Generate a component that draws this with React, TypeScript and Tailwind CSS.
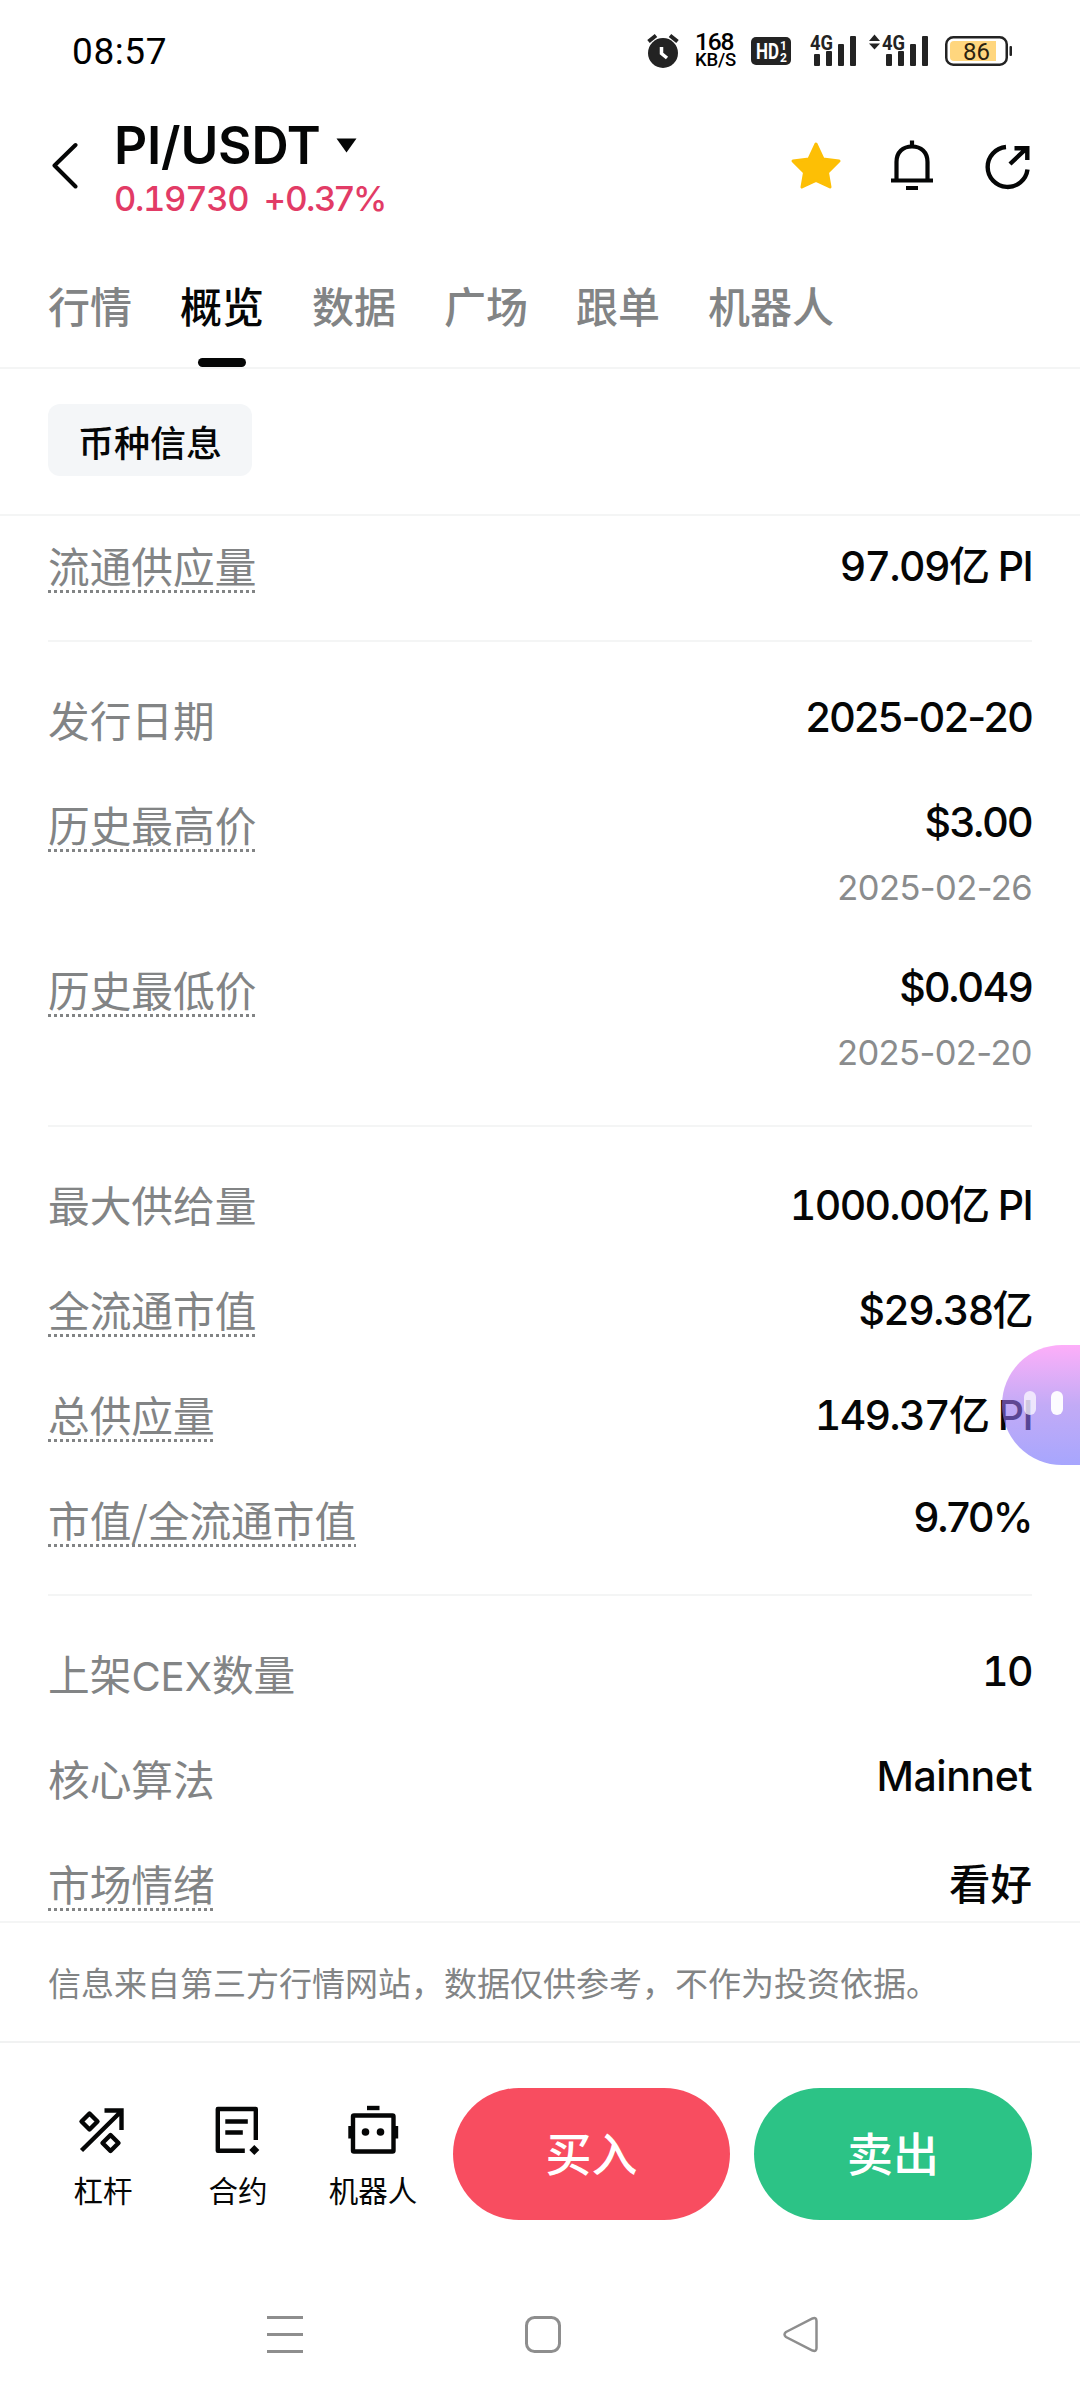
import type { ReactNode } from "react";

const inter = "font-['Inter','Noto_Sans_CJK_SC',sans-serif]";

function figures(text: string) {
  return /1|亿/.test(text) ? "[font-feature-settings:'tnum']" : "";
}

function Label({ children, dotted }: { children: string; dotted?: boolean }) {
  const parts = children.split(/([A-Z]+)/);
  return (
    <span
      className={
        "h-[54px] leading-[52px] text-[41.700px] text-[#828485] whitespace-nowrap " +
        (dotted
          ? "bg-[repeating-linear-gradient(90deg,#828485_0,#828485_3px,transparent_3px,transparent_6px)] bg-[length:100%_3px] bg-bottom bg-no-repeat"
          : "")
      }
    >
      {parts.map((p, i) =>
        /^[A-Z]+$/.test(p) ? (
          <span key={i} className="font-['Inter'] text-[40px] leading-none">
            {p}
          </span>
        ) : (
          p
        )
      )}
    </span>
  );
}

type RowData = { label: string; value: string; dotted?: boolean; date?: string; cjk?: boolean };

function tracking(value: string) {
  if (value === "看好") return " text-[41.5px]";
  if (value === "Mainnet") return " text-[41px] tracking-[-0.4px]";
  return " text-[41px] tracking-[-1.6px]";
}

function Row({ label, value, dotted, date, cjk }: RowData) {
  return (
    <div className="flex items-start justify-between">
      <div className="flex h-[84px] items-center">
        <Label dotted={dotted}>{label}</Label>
      </div>
      <div className="flex flex-col items-end">
        <div
          className={
            "flex items-center whitespace-pre font-medium text-[#050606] " +
            inter +
            " " +
            figures(value) +
            tracking(value) +
            (cjk ? " h-[86px] mb-[-2px]" : " h-[80px] mb-[-2px]")
          }
        >
          {value}
        </div>
        {date && (
          <div className={"mb-[12px] flex h-[54px] items-center text-[34.5px] tracking-[-0.6px] text-[#8a8c8d] " + inter}>
            {date}
          </div>
        )}
      </div>
    </div>
  );
}

function Section({ rows, className }: { rows: RowData[]; className: string }) {
  return (
    <section className={"flex shrink-0 flex-col gap-[21px] border-[#f4f5f5] " + className}>
      {rows.map((r) => (
        <Row key={r.label} {...r} />
      ))}
    </section>
  );
}

function Signal({ arrows }: { arrows?: boolean }) {
  return (
    <svg className="overflow-visible" width="60" height="36" viewBox="0 0 60 36" fill="#232323">
      {arrows && (
        <>
          <path d="M0 8 L5.500 1.500 L11 8Z" />
          <path d="M0 10.500 L5.500 16.500 L11 10.500Z" />
        </>
      )}
      <text x="13" y="16.500" fontSize="21" fontWeight="700" fontFamily="Roboto, sans-serif" textLength="23" lengthAdjust="spacingAndGlyphs">
        4G
      </text>
      <rect x="17" y="21" width="6" height="12" rx="1" />
      <rect x="29" y="18" width="6" height="15" rx="1" />
      <rect x="41" y="11" width="6" height="22" rx="1" />
      <rect x="53" y="3" width="6" height="30" rx="1" />
    </svg>
  );
}

function StatusBar() {
  return (
    <div className="flex h-[102px] shrink-0 items-center pl-[72px] pr-[67px] font-['Roboto',sans-serif]">
      <span className="text-[37px] leading-none tracking-[0.6px] text-black">08:57</span>
      <div className="ml-auto flex items-center">
        <svg width="32" height="36" viewBox="0 0 32 36">
          <circle cx="16" cy="20" r="15" fill="#232323" />
          <path d="M1.500 8.500 L9 2.500 M30.500 8.500 L23 2.500" stroke="#232323" strokeWidth="4" />
          <path d="M14.500 14 V20.500 L20 25" stroke="#fff" strokeWidth="3.500" fill="none" />
        </svg>
        <div className="ml-[16px] flex w-[41px] flex-col items-start text-black">
          <span className="text-[24.5px] font-medium leading-[19px] tracking-[-1.2px]">168</span>
          <span className="text-[18.500px] font-medium leading-[19px] tracking-[-0.2px]">KB/S</span>
        </div>
        <svg className="ml-[15px]" width="41" height="29" viewBox="0 0 41 29">
          <rect width="40" height="28" rx="5" fill="#232323" />
          <g fill="#fff" fontFamily="Roboto, sans-serif" fontWeight="700">
            <text x="5" y="22" fontSize="22" textLength="23" lengthAdjust="spacingAndGlyphs">HD</text>
            <text x="29" y="13" fontSize="12">1</text>
            <text x="29" y="25" fontSize="12">2</text>
          </g>
        </svg>
        <div className="ml-[5px] flex gap-[12px]">
          <Signal />
          <Signal arrows />
        </div>
        <svg className="ml-[16px]" width="68" height="30" viewBox="0 0 68 30">
          <rect x="1.250" y="1.250" width="60.500" height="27.500" rx="7" fill="#fff" stroke="#232323" strokeWidth="2.500" />
          <path d="M9 5 H51 V25 H9 A4 4 0 0 1 5 21 V9 A4 4 0 0 1 9 5Z" fill="#ffd67e" />
          <rect x="64.500" y="10" width="2.500" height="10" rx="1" fill="#232323" />
          <text x="31.500" y="23.500" textAnchor="middle" fontSize="24" fill="#2b2210" fontFamily="Roboto, sans-serif">86</text>
        </svg>
      </div>
    </div>
  );
}

function Header() {
  return (
    <header className="flex h-[128px] shrink-0 pl-[52px] pr-[49px]">
      <svg className="mt-[40px]" width="28" height="48" viewBox="0 0 28 48">
        <path d="M23.500 3 L2.500 23.500 L23.500 44.500" fill="none" stroke="#050606" strokeWidth="4" strokeLinecap="round" strokeLinejoin="round" />
      </svg>
      <div className={"ml-[34px] mt-[12px] flex flex-col " + inter}>
        <div className="flex items-center">
          <h1 className="text-[51.500px] font-semibold leading-[62px] tracking-[-0.2px] text-[#050606]">PI/USDT</h1>
          <svg className="ml-[15px]" width="21" height="15" viewBox="0 0 21 15">
            <path d="M0.500 0.500 H20.500 L10.500 14.500Z" fill="#050606" />
          </svg>
        </div>
        <div className="flex gap-[15px] text-[34.500px] font-medium leading-[46px] text-[#e23b66]">
          <span className="tracking-[-1.3px] [font-feature-settings:'tnum']">0.19730</span>
          <span className="tracking-[-1.1px]">+0.37%</span>
        </div>
      </div>
      <div className="ml-auto mt-[38px] flex h-[52px]">
        <svg width="52" height="52" viewBox="0 0 52 52">
          <path d="M26 4 L33 19 L49 21 L37.500 32.500 L40 47 L26 40.500 L12 47 L14.500 32.500 L3 21 L19 19Z" fill="#fdbf05" stroke="#fdbf05" strokeWidth="3" strokeLinejoin="round" />
        </svg>
        <svg className="ml-[48px]" width="44" height="52" viewBox="0 0 44 52" fill="none" stroke="#050606" strokeWidth="4.200">
          <path d="M22 0.500 V7" />
          <path d="M6.500 40 V22 C6.500 12 13 6.500 22 6.500 S37.500 12 37.500 22 V40" />
          <path d="M1 40.500 H43 M16 48 H28" />
        </svg>
        <svg className="ml-[51px]" width="46" height="52" viewBox="0 0 46 52" fill="none" stroke="#050606" strokeWidth="4.400">
          <path d="M21 7 A20 20 0 1 0 42.500 29.500" />
          <path d="M25 24 L42 8 M29.500 8.200 H42.300 V20" />
        </svg>
      </div>
    </header>
  );
}

const tabs = ["行情", "概览", "数据", "广场", "跟单", "机器人"];

const supply: RowData[] = [{ label: "流通供应量", value: "97.09亿 PI", dotted: true, cjk: true }];
const prices: RowData[] = [
  { label: "发行日期", value: "2025-02-20" },
  { label: "历史最高价", value: "$3.00", dotted: true, date: "2025-02-26" },
  { label: "历史最低价", value: "$0.049", dotted: true, date: "2025-02-20" },
];
const caps: RowData[] = [
  { label: "最大供给量", value: "1000.00亿 PI", cjk: true },
  { label: "全流通市值", value: "$29.38亿", dotted: true, cjk: true },
  { label: "总供应量", value: "149.37亿 PI", dotted: true, cjk: true },
  { label: "市值/全流通市值", value: "9.70%", dotted: true },
];
const misc: RowData[] = [
  { label: "上架CEX数量", value: "10" },
  { label: "核心算法", value: "Mainnet" },
  { label: "市场情绪", value: "看好", dotted: true, cjk: true },
];

function Action({ label, children, className }: { label: string; children: ReactNode; className: string }) {
  return (
    <div className={"flex flex-col items-center " + className}>
      <svg width="52" height="52" viewBox="0 0 52 52" fill="none" stroke="#050606" strokeWidth="4.400">
        {children}
      </svg>
      <span className="mt-[11px] text-[29.500px] leading-[44px] text-[#050606]">{label}</span>
    </div>
  );
}

export default function App() {
  return (
    <div className="relative flex h-[2400px] w-[1080px] flex-col overflow-hidden bg-white font-['Noto_Sans_CJK_SC',sans-serif]">
      <StatusBar />
      <Header />
      <nav className="flex h-[139px] shrink-0 gap-[48px] border-b-2 border-[#f4f5f5] px-[48px]">
        {tabs.map((t) => (
          <div
            key={t}
            className={"flex flex-col items-center text-[42px] font-medium " + (t === "概览" ? "text-[#050606]" : "text-[#828485]")}
          >
            <span className="mt-[45px] leading-[60px]">{t}</span>
            {t === "概览" && <span className="mt-[23px] h-[9px] w-[48px] rounded-full bg-[#050606]" />}
          </div>
        ))}
      </nav>
      <div className="flex h-[147px] shrink-0 items-start border-b-2 border-[#f4f5f5] px-[48px] pt-[35px]">
        <div className="flex h-[72px] items-center rounded-[12px] bg-[#f4f6f8] px-[30px] pt-[2px] text-[36px] font-medium text-[#050606]">币种信息</div>
      </div>
      <main className="flex h-[1407px] shrink-0 flex-col overflow-hidden border-b-2 border-[#f4f5f5] px-[48px]">
        <Section rows={supply} className="border-b-2 pb-[32px] pt-[8px]" />
        <Section rows={prices} className="border-b-2 pb-[33px] pt-[36px]" />
        <Section rows={caps} className="border-b-2 pb-[32px] pt-[36px]" />
        <Section rows={misc} className="pt-[36px]" />
      </main>
      <div className="flex h-[120px] shrink-0 items-center border-b-2 border-[#f1f2f2] px-[48px] pt-[2px] text-[33px] text-[#828485]">
        信息来自第三方行情网站，数据仅供参考，不作为投资依据。
      </div>
      <div className="flex h-[219px] shrink-0 items-start pr-[48px] pt-[45px]">
        <div className="flex pl-[58px] pt-[16px]">
          <Action label="杠杆" className="w-[90px]">
            <g transform="translate(-2.500 0)">
              <path d="M7 46.500 L46 8 M30 6.500 H47 V26" />
              <path d="M15 9.500 L23 17.500 L15 25.500 L7 17.500Z M36 31 L44 39 L36 47 L28 39Z" strokeLinejoin="round" />
            </g>
          </Action>
          <Action label="合约" className="ml-[45px] w-[90px]">
            <g transform="translate(-1.200 0)">
              <path d="M34 46.800 H7 V5 H45 V36" strokeLinejoin="round" />
              <path d="M14.500 17.500 H37 M14.500 28.500 H32" />
              <path d="M43.500 41 L48.500 46 L43.500 51 L38.500 46Z" fill="#050606" stroke="none" />
            </g>
          </Action>
          <Action label="机器人" className="ml-[44px] w-[92px]">
            <path d="M20 4 H32.500" />
            <rect x="6" y="11.500" width="40.500" height="36" rx="1" />
            <path d="M3.500 22 V34.500 M49 22 V34.500" />
            <circle cx="18.500" cy="28" r="3.800" fill="#050606" stroke="none" />
            <circle cx="33.500" cy="28" r="3.800" fill="#050606" stroke="none" />
          </Action>
        </div>
        <div className="ml-auto flex gap-[24px] text-[46px] font-medium text-white">
          <button className="h-[132px] w-[277px] rounded-full bg-[#f84d60] pb-[5px]">买入</button>
          <button className="h-[132px] w-[278px] rounded-full bg-[#2cc386] pb-[5px]">卖出</button>
        </div>
      </div>
      <div className="flex items-center pl-[267px] pt-[54px]">
        <svg width="36" height="37" viewBox="0 0 36 37" stroke="#8e8e8e" strokeWidth="3">
          <path d="M0 1.500 H36 M0 18.500 H36 M0 35.500 H36" />
        </svg>
        <svg className="ml-[222px]" width="36" height="37" viewBox="0 0 36 37" fill="none" stroke="#8e8e8e" strokeWidth="3">
          <rect x="1.500" y="1.500" width="33" height="34" rx="8" />
        </svg>
        <svg className="ml-[222px]" width="36" height="37" viewBox="0 0 36 37" fill="none" stroke="#8e8e8e" strokeWidth="2.500">
          <path d="M3 16 L29.500 2.500 Q33.500 1 33.500 5 V32 Q33.500 36 29.500 34.500 L3 21 Q0 18.500 3 16Z" />
        </svg>
      </div>
      {/* floating assistant tab docked to the right edge */}
      <div className="absolute left-[1002px] top-[1345px] h-[120px] w-[78px] overflow-hidden rounded-l-[60px]">
        <div className="h-full w-full bg-linear-to-b from-[#fc78f5]/60 via-[#9a72f0]/60 to-[#6c6afc]/60" />
        <span className="absolute left-[22px] top-[46px] h-[24px] w-[12px] rounded-full bg-white/70" />
        <span className="absolute left-[49px] top-[46px] h-[24px] w-[12px] rounded-full bg-white/95" />
      </div>
    </div>
  );
}
